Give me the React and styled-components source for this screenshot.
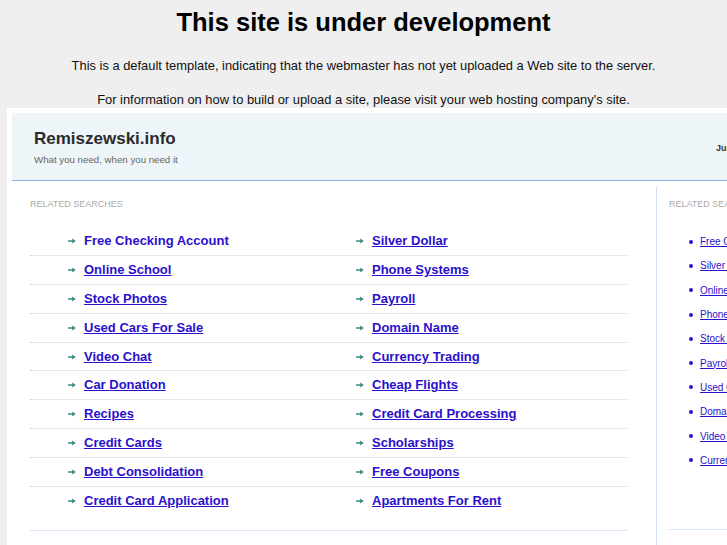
import React from "react";
import styled, { createGlobalStyle } from "styled-components";

const GlobalStyle = createGlobalStyle`
  html, body {
    margin: 0;
    padding: 0;
    overflow: hidden;
    background: #efefef;
    font-family: "Liberation Sans", Arial, sans-serif;
  }
`;

const Page = styled.div`
  width: 727px;
  height: 545px;
  overflow: hidden;
`;

const Intro = styled.div`
  text-align: center;
  color: #111;
`;

const Title = styled.h1`
  margin: 0;
  padding-top: 7px;
  font-size: 25.5px;
  line-height: 30px;
  font-weight: bold;
  color: #000;
`;

const Note = styled.p`
  margin: ${({ $top }) => $top}px 0 0;
  font-size: 12.9px;
  line-height: 16px;
`;

const Frame = styled.div`
  margin-left: 7px;
  width: 900px;
  height: 460px;
  background: #fff;
  padding: 5px;
  box-sizing: border-box;
`;

const Header = styled.header`
  display: flex;
  align-items: center;
  height: 68px;
  background: #eef5f8;
  border-bottom: 1px solid #8daee6;
  box-sizing: border-box;
`;

const Brand = styled.div`
  flex: 0 0 704px;
  padding-left: 22px;
  box-sizing: border-box;
`;

const SiteName = styled.div`
  font-size: 17px;
  font-weight: bold;
  line-height: 22px;
  color: #2b2b2b;
`;

const Tagline = styled.div`
  margin-top: 3px;
  font-size: 9.7px;
  line-height: 13px;
  color: #666;
`;

const DateLine = styled.div`
  font-size: 9px;
  font-weight: bold;
  color: #333;
  white-space: nowrap;
  padding-top: 2px;
`;

const Body = styled.div`
  display: flex;
  margin-top: 6px;
`;

const Main = styled.section`
  flex: 0 0 644px;
  padding: 11.5px 28px 0 18px;
  box-sizing: border-box;
`;

const Side = styled.aside`
  flex: 1;
  border-left: 1px solid #cfdef2;
  padding: 11.5px 0 0 12px;
  height: 400px;
`;

const Heading = styled.div`
  font-size: 9px;
  line-height: 11px;
  color: #aaa;
  text-transform: uppercase;
`;

const LinkTable = styled.div`
  margin-top: 18px;
`;

const Row = styled.div`
  display: grid;
  grid-template-columns: 288px 1fr;
  height: 28.8px;
  align-items: center;
  box-sizing: border-box;
  border-bottom: 1px dotted #c6d6ea;
  &:last-child {
    border-bottom: none;
  }
`;

const Cell = styled.div`
  display: flex;
  align-items: center;
  padding-left: 38px;
`;

const Arrow = styled.svg`
  width: 8px;
  height: 6px;
  margin-right: 8px;
  flex: none;
`;

const BigLink = styled.a`
  font-size: 13px;
  font-weight: bold;
  color: #2a10cc;
  text-decoration: ${({ $plain }) => ($plain ? "none" : "underline")};
  line-height: 16px;
`;

const Rule = styled.div`
  height: 1px;
  background: #d6e6f4;
  margin-top: 14.5px;
`;

const SideList = styled.ul`
  list-style: none;
  margin: 20px 0 0;
  padding: 0 0 0 20px;
`;

const SideItem = styled.li`
  display: flex;
  align-items: center;
  height: 24.3px;
  white-space: nowrap;
`;

const Dot = styled.span`
  width: 4px;
  height: 4px;
  border-radius: 50%;
  background: #2a10cc;
  margin-right: 7px;
  flex: none;
`;

const SmallLink = styled.a`
  font-size: 10px;
  color: #2a10cc;
  text-decoration: underline;
`;

const SideRule = styled(Rule)`
  margin-top: 57px;
`;

const leftCol = [
  "Free Checking Account",
  "Online School",
  "Stock Photos",
  "Used Cars For Sale",
  "Video Chat",
  "Car Donation",
  "Recipes",
  "Credit Cards",
  "Debt Consolidation",
  "Credit Card Application",
];

const rightCol = [
  "Silver Dollar",
  "Phone Systems",
  "Payroll",
  "Domain Name",
  "Currency Trading",
  "Cheap Flights",
  "Credit Card Processing",
  "Scholarships",
  "Free Coupons",
  "Apartments For Rent",
];

const sideLinks = [
  "Free Checking Account",
  "Silver Dollar",
  "Online School",
  "Phone Systems",
  "Stock Photos",
  "Payroll",
  "Used Cars For Sale",
  "Domain Name",
  "Video Chat",
  "Currency Trading",
];

const ArrowIcon = () => (
  <Arrow viewBox="0 0 8 6">
    <path d="M0 2.2h4.2V0.4L7.8 3 4.2 5.6V3.8H0z" fill="#3a8c84" />
  </Arrow>
);

const Entry = ({ label, plain }) => (
  <Cell>
    <ArrowIcon />
    <BigLink href="#" $plain={plain}>
      {label}
    </BigLink>
  </Cell>
);

export default function App() {
  return (
    <Page>
      <GlobalStyle />
      <Intro>
        <Title>This site is under development</Title>
        <Note $top={21}>
          This is a default template, indicating that the webmaster has not yet
          uploaded a Web site to the server.
        </Note>
        <Note $top={18}>
          For information on how to build or upload a site, please visit your
          web hosting company's site.
        </Note>
      </Intro>
      <Frame>
        <Header>
          <Brand>
            <SiteName>Remiszewski.info</SiteName>
            <Tagline>What you need, when you need it</Tagline>
          </Brand>
          <DateLine>June 12, 2012</DateLine>
        </Header>
        <Body>
          <Main>
            <Heading>Related Searches</Heading>
            <LinkTable>
              {leftCol.map((label, i) => (
                <Row key={label}>
                  <Entry label={label} plain={i === 0} />
                  <Entry label={rightCol[i]} />
                </Row>
              ))}
            </LinkTable>
            <Rule />
          </Main>
          <Side>
            <Heading>Related Searches</Heading>
            <SideList>
              {sideLinks.map((label) => (
                <SideItem key={label}>
                  <Dot />
                  <SmallLink href="#">{label}</SmallLink>
                </SideItem>
              ))}
            </SideList>
            <SideRule />
          </Side>
        </Body>
      </Frame>
    </Page>
  );
}
